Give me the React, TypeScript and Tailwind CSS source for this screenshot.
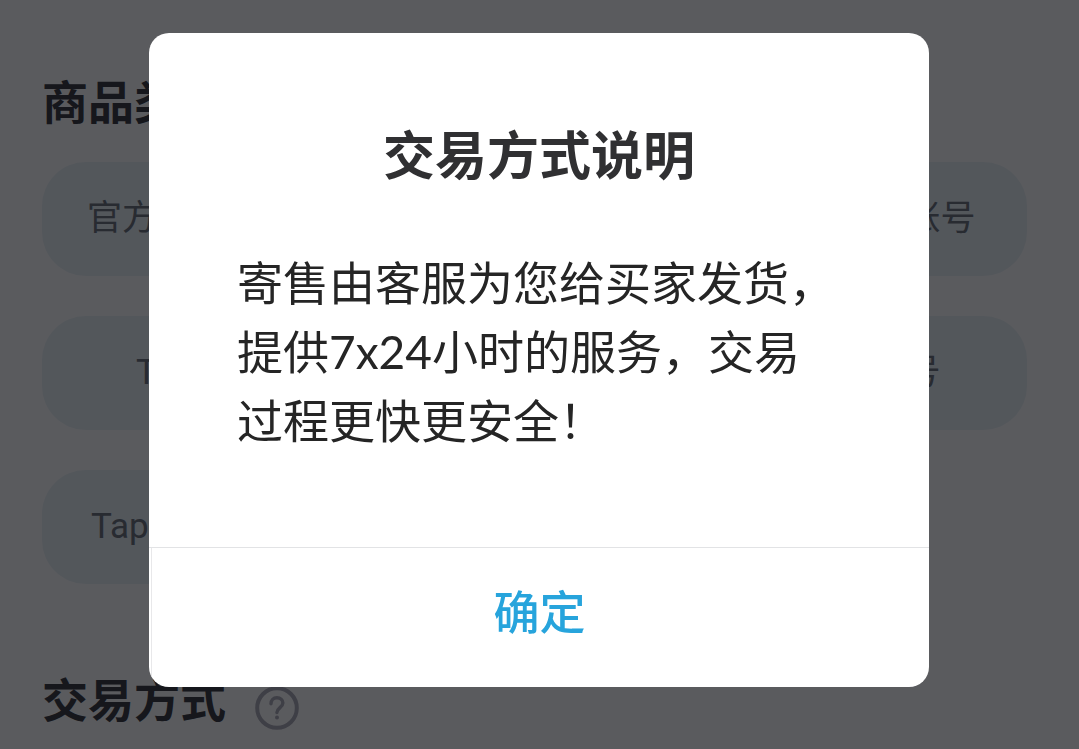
import { useState } from "react";

const LEFT_CHANNELS = ["官方安卓账号", "TT账号", "Tap Tap 账号"];
const RIGHT_CHANNELS = ["苹果 QQ账号", "B服账号"];

function HelpIcon() {
  return (
    <svg viewBox="0 0 44 44" fill="none" stroke="currentColor" className="size-11" aria-hidden="true">
      <circle cx="22" cy="22" r="19.8" strokeWidth="4" />
      <path
        d="M16 17.8c0-3.8 2.4-6 5.9-6s6 2.3 6 5.3c0 4.2-6 4.9-6 9.4"
        strokeWidth="3.4"
        strokeLinecap="round"
      />
      <circle cx="22" cy="31.6" r="2" fill="currentColor" stroke="none" />
    </svg>
  );
}

function ChannelColumn({ names }: { names: string[] }) {
  return (
    <div className="flex w-[300px] flex-col gap-10">
      {names.map((name) => (
        <button
          key={name}
          type="button"
          className="h-[114px] rounded-[44px] bg-[#ebf3f7] font-[Roboto,'Noto_Sans_CJK_SC',sans-serif] text-[35px] text-[#6c727c]"
        >
          {name}
        </button>
      ))}
    </div>
  );
}

function ProductPage({ onHelp }: { onHelp: () => void }) {
  return (
    <main className="pt-[68px] pr-[52px] pl-[42px]">
      <section>
        <h2 className="text-[46px] leading-[68px] font-bold text-[#38383e]">商品类型</h2>
        <div className="mt-[26px] flex items-start justify-between">
          <ChannelColumn names={LEFT_CHANNELS} />
          <ChannelColumn names={RIGHT_CHANNELS} />
        </div>
      </section>

      <section className="mt-[82px] flex items-start gap-[29px]">
        <h2 className="text-[46px] leading-[68px] font-bold text-[#38383e]">交易方式</h2>
        <button type="button" aria-label="交易方式说明" onClick={onHelp} className="mt-5 text-[#aeacb8]">
          <HelpIcon />
        </button>
      </section>
    </main>
  );
}

function TradeDialog({ onClose }: { onClose: () => void }) {
  return (
    <div className="fixed inset-0 flex items-start justify-center bg-[#04060a]/66 pt-[33px] pr-px">
      <div
        role="dialog"
        aria-modal="true"
        aria-labelledby="trade-title"
        className="w-full max-w-[780px] overflow-hidden rounded-[20px] bg-white"
      >
        <div className="px-[88px] pt-[84px] pb-[92px]">
          <h1 id="trade-title" className="text-center text-[52px] leading-[76px] font-bold text-[#303032]">
            交易方式说明
          </h1>
          <p className="mt-[55px] text-[46px] leading-[69px] text-[#252525]">
            寄售由客服为您给买家发货，
            <br />
            提供7x24小时的服务，交易
            <br />
            过程更快更安全！
          </p>
        </div>
        <div className="border-t border-[#e2e3e5] pl-0.5">
          <button
            type="button"
            onClick={onClose}
            className="h-[139px] w-full border-l border-[#e8e8ea] pr-0.5 pb-3 text-[46px] font-medium text-[#27a4dc]"
          >
            确定
          </button>
        </div>
      </div>
    </div>
  );
}

export default function App() {
  const [open, setOpen] = useState(true);

  return (
    <div className="h-screen overflow-hidden bg-white font-[Lato,'Noto_Sans_CJK_SC',sans-serif]">
      <ProductPage onHelp={() => setOpen(true)} />
      {open && <TradeDialog onClose={() => setOpen(false)} />}
    </div>
  );
}
